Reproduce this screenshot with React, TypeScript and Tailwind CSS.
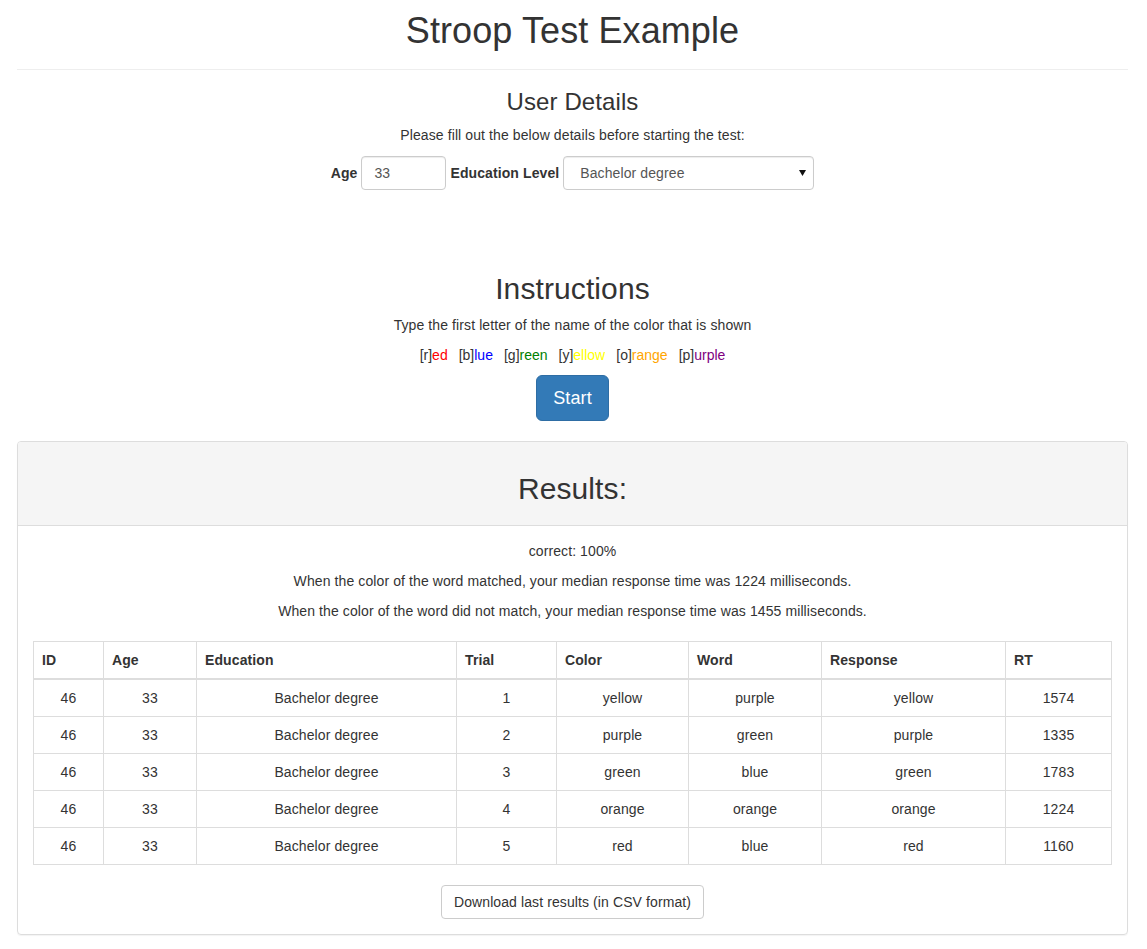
import React from 'react'

const colors = [
    { key: 'r', rest: 'ed', cls: 'text-[#ff0000]' },
    { key: 'b', rest: 'lue', cls: 'text-[#0000ff]' },
    { key: 'g', rest: 'reen', cls: 'text-[#008000]' },
    { key: 'y', rest: 'ellow', cls: 'text-[#ffff00]' },
    { key: 'o', rest: 'range', cls: 'text-[#ffa500]' },
    { key: 'p', rest: 'urple', cls: 'text-[#800080]' },
]

const rows = [
    { trial: 1, color: 'yellow', word: 'purple', response: 'yellow', rt: 1574 },
    { trial: 2, color: 'purple', word: 'green', response: 'purple', rt: 1335 },
    { trial: 3, color: 'green', word: 'blue', response: 'green', rt: 1783 },
    { trial: 4, color: 'orange', word: 'orange', response: 'orange', rt: 1224 },
    { trial: 5, color: 'red', word: 'blue', response: 'red', rt: 1160 },
]

const headers = ['ID', 'Age', 'Education', 'Trial', 'Color', 'Word', 'Response', 'RT']
const widths = ['w-[70px]', 'w-[93px]', 'w-[260px]', 'w-[100px]', 'w-[132px]', 'w-[133px]', 'w-[184px]', 'w-[106px]']

function App() {
    return (
        <div className="min-h-screen bg-white pl-[17px] pr-[19px] pb-[14px] font-['Liberation_Sans',Arial,sans-serif] text-[14px] leading-[20px] tracking-[0.1px] text-[#333]">
            <h1 className="mt-[11px] text-center text-[36px] leading-[40px] font-normal">Stroop Test Example</h1>
            <hr className="mt-[18px] border-0 border-t border-[#eee]" />

            <div className="flex flex-col items-center">
                <h3 className="mt-[19px] text-[24px] leading-[26px] font-normal">User Details</h3>
                <p className="mt-[10px]">Please fill out the below details before starting the test:</p>
                <div className="mt-[11px] flex items-center">
                    <label className="mr-[4px] font-bold">Age</label>
                    <input
                        className="h-[34px] w-[85px] rounded-[4px] border border-[#ccc] px-[12px] text-[#555] shadow-[inset_0_1px_1px_rgba(0,0,0,0.075)] outline-none"
                        defaultValue="33"
                    />
                    <label className="ml-[4px] mr-[4px] font-bold">Education Level</label>
                    <div className="relative">
                        <select
                            className="h-[34px] w-[251px] appearance-none rounded-[4px] border border-[#ccc] bg-white pl-[16px] pr-[24px] text-[#555] shadow-[inset_0_1px_1px_rgba(0,0,0,0.075)] outline-none"
                            defaultValue="Bachelor degree"
                        >
                            <option>High school</option>
                            <option>Bachelor degree</option>
                            <option>Master degree</option>
                            <option>Doctorate</option>
                        </select>
                        <svg className="pointer-events-none absolute right-[8px] top-[14px] h-[6px] w-[7px]" viewBox="0 0 7 6">
                            <path d="M0 0h7L3.5 6z" fill="#111" />
                        </svg>
                    </div>
                </div>

                <h2 className="mt-[82px] text-[30px] leading-[33px] font-normal">Instructions</h2>
                <p className="mt-[10px]">Type the first letter of the name of the color that is shown</p>
                <div className="mt-[10px] flex gap-[11px] tracking-normal">
                    {colors.map((c) => (
                        <span key={c.key}>
                            [{c.key}]<span className={c.cls}>{c.rest}</span>
                        </span>
                    ))}
                </div>
                <button className="mt-[10px] rounded-[6px] border border-[#2e6da4] bg-[#337ab7] px-[16px] py-[10px] text-[18px] leading-[24px] text-white">
                    Start
                </button>
            </div>

            <div className="mt-[20px] rounded-[4px] border border-[#ddd] shadow-[0_1px_1px_rgba(0,0,0,0.05)]">
                <div className="rounded-t-[3px] border-b border-[#ddd] bg-[#f5f5f5] px-[15px] pb-[20px] pt-[30px]">
                    <h2 className="text-center text-[30px] leading-[33px] font-normal">Results:</h2>
                </div>
                <div className="flex flex-col items-center p-[15px]">
                    <p>correct: 100%</p>
                    <p className="mt-[10px]">When the color of the word matched, your median response time was 1224 milliseconds.</p>
                    <p className="mt-[10px]">When the color of the word did not match, your median response time was 1455 milliseconds.</p>

                    <table className="mt-[20px] w-full table-fixed border-collapse border border-[#ddd]">
                        <thead>
                            <tr>
                                {headers.map((h, i) => (
                                    <th key={h} className={`${widths[i]} border border-b-2 border-[#ddd] p-[8px] text-left font-bold`}>
                                        {h}
                                    </th>
                                ))}
                            </tr>
                        </thead>
                        <tbody>
                            {rows.map((r) => (
                                <tr key={r.trial} className="text-center">
                                    <td className="border border-[#ddd] p-[8px]">46</td>
                                    <td className="border border-[#ddd] p-[8px]">33</td>
                                    <td className="border border-[#ddd] p-[8px]">Bachelor degree</td>
                                    <td className="border border-[#ddd] p-[8px]">{r.trial}</td>
                                    <td className="border border-[#ddd] p-[8px]">{r.color}</td>
                                    <td className="border border-[#ddd] p-[8px]">{r.word}</td>
                                    <td className="border border-[#ddd] p-[8px]">{r.response}</td>
                                    <td className="border border-[#ddd] p-[8px]">{r.rt}</td>
                                </tr>
                            ))}
                        </tbody>
                    </table>

                    <button className="mt-[20px] rounded-[4px] border border-[#ccc] bg-white px-[12px] py-[6px] text-[#333]">
                        Download last results (in CSV format)
                    </button>
                </div>
            </div>
        </div>
    )
}

export default App
